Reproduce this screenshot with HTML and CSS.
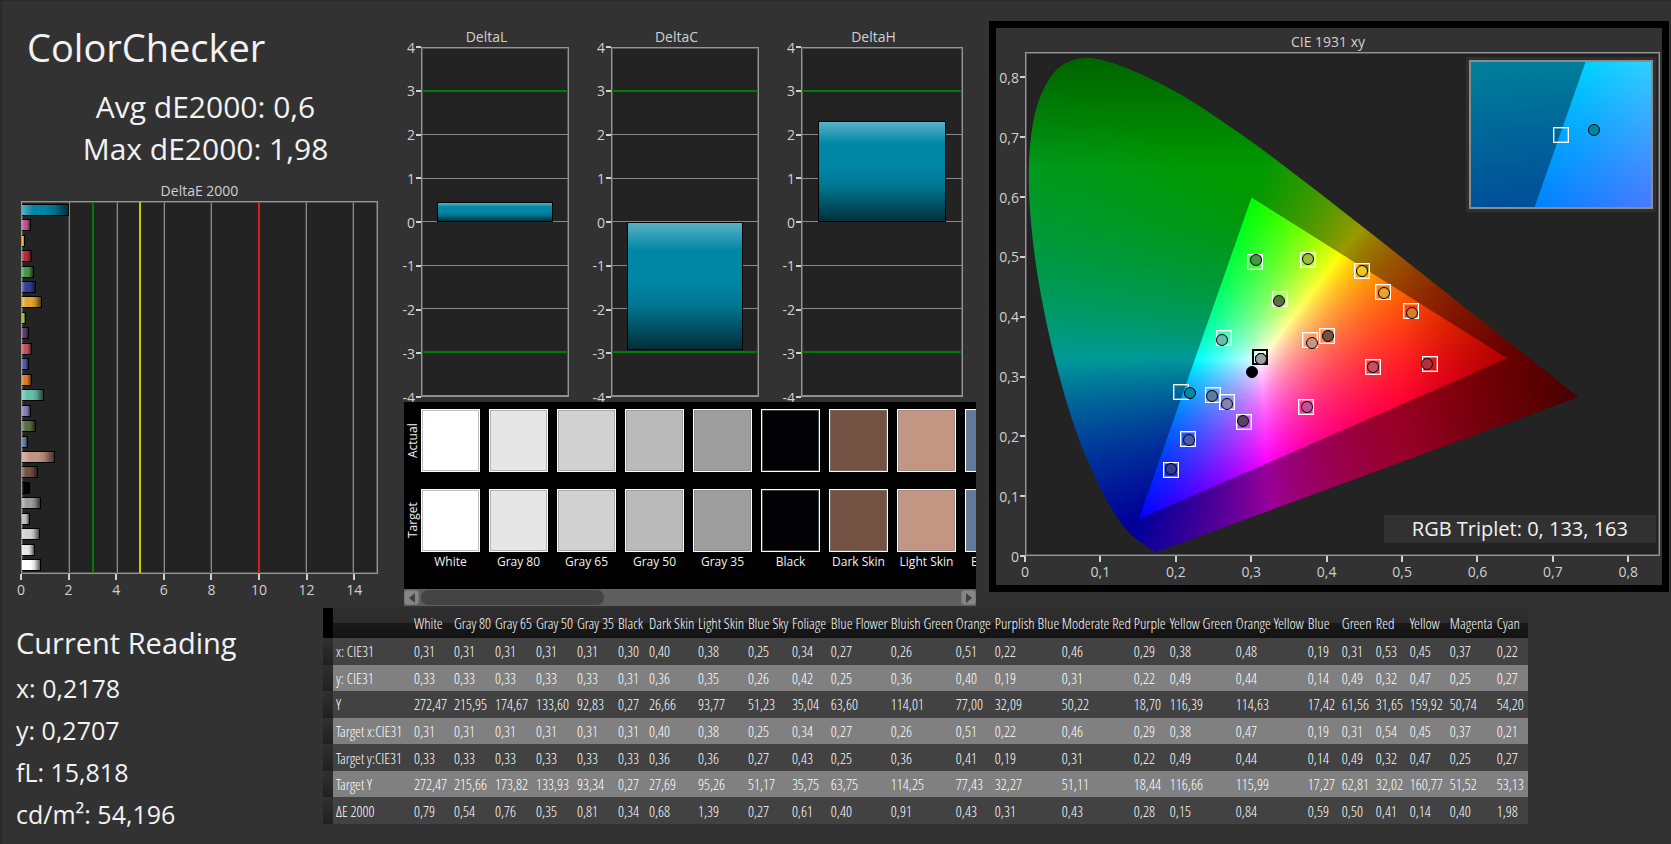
FILE: index.html
```html
<!DOCTYPE html>
<html lang="en">

<head>
    <meta charset="UTF-8" />
    <meta name="viewport" content="width=device-width, initial-scale=1.0" />
    <title>ColorChecker</title>
    <link rel="stylesheet" href="styles.css">
</head>

<body>
    <main class="top">
        <section class="summary">
            <h1>ColorChecker</h1>
            <p class="stat">Avg dE2000: 0,6</p>
            <p class="stat">Max dE2000: 1,98</p>
            <h2 class="chart-title">DeltaE 2000</h2>
            <div class="plot de-plot" data-deplot></div>
            <div class="x-axis" data-deaxis></div>
        </section>

        <section class="middle">
            <div class="deltas" data-deltas></div>
            <div class="swatches">
                <div class="swatch-view">
                    <div class="swatch-side">
                        <span>Actual</span>
                        <span>Target</span>
                    </div>
                    <div class="swatch-list" data-swatches></div>
                </div>
                <div class="scrollbar">
                    <button type="button" aria-label="Scroll left"><svg viewBox="0 0 6 10"><path d="M6 0v10L0 5z" /></svg></button>
                    <div class="track"><div class="thumb"></div></div>
                    <button type="button" aria-label="Scroll right"><svg viewBox="0 0 6 10"><path d="M0 0v10l6-5z" /></svg></button>
                </div>
            </div>
        </section>

        <section class="cie">
            <h2 class="chart-title">CIE 1931 xy</h2>
            <div class="cie-body">
                <div class="cie-y" data-ciey></div>
                <div class="plot cie-plot" data-cieplot>
                    <canvas data-gamut></canvas>
                    <div class="inset" data-inset><canvas data-zoom></canvas></div>
                    <p class="triplet">RGB Triplet: 0, 133, 163</p>
                </div>
            </div>
            <div class="x-axis cie-x" data-ciex></div>
        </section>
    </main>

    <div class="bottom">
        <section class="reading">
            <h2>Current Reading</h2>
            <p>x: 0,2178</p>
            <p>y: 0,2707</p>
            <p>fL: 15,818</p>
            <p>cd/m²: 54,196</p>
        </section>
        <div class="table-wrap">
            <table data-table></table>
        </div>
    </div>

    <script src="script.js"></script>
</body>

</html>
```
FILE: styles.css
```css
* {
    margin: 0;
    padding: 0;
    box-sizing: border-box;
}

body {
    font-family: "Open Sans", "Noto Sans", sans-serif;
    background: #323232;
    color: #f2f2f2;
    min-height: 100vh;
    border-left: 2px solid #2a2a2a;
    border-top: 1px solid #2a2a2a;
    overflow-x: hidden;
}

.top {
    display: grid;
    grid-template-columns: minmax(0, 402fr) minmax(0, 585fr) minmax(0, 680fr);
    padding-right: 2px;
}

h1 {
    font-size: 38px;
    font-weight: 400;
    line-height: 50px;
    padding: 0 6px;
    margin-bottom: 14px;
}

.stat {
    font-size: 30px;
    line-height: 42px;
    text-align: center;
    padding-left: 12px;
}

.chart-title {
    font-size: 14px;
    font-weight: 400;
    line-height: 20px;
    text-align: center;
    color: #d0d0d0;
}

.summary {
    padding: 21px 26px 0 19px;
}

.summary .chart-title {
    margin-top: 11px;
}

.plot {
    position: relative;
    background: #232323;
    border: 1px solid #959595;
    box-shadow: inset 0 0 0 1px #555;
}

.de-plot {
    height: 373px;
    display: flex;
    flex-direction: column;
}

.grid-v,
.limit-v {
    position: absolute;
    top: 0;
    bottom: 0;
    width: 1px;
    background: #8a8a8a;
    box-shadow: -1px 0 #454545;
}

.limit-v {
    width: 2px;
    margin-left: -1px;
    box-shadow: none;
}

.limit-v.green {
    background: #007c00;
}

.limit-v.yellow {
    background: #c8c800;
}

.limit-v.red {
    background: #d42020;
}

.de-row {
    flex: 1;
    display: flex;
    align-items: center;
}

.de-bar {
    position: relative;
    height: 12px;
    border: 1px solid #000;
    border-left: none;
    background-image: linear-gradient(to right, rgba(255, 255, 255, 0.35), rgba(255, 255, 255, 0) 25%, rgba(0, 0, 0, 0) 50%, rgba(0, 0, 0, 0.15) 70%, rgba(0, 0, 0, 0.65));
}

.x-axis {
    position: relative;
    height: 27px;
    font-size: 14px;
    line-height: 20px;
    color: #d0d0d0;
}

.x-axis span {
    position: absolute;
    width: 40px;
    margin-left: -20px;
    text-align: center;
}

.x-axis span::before {
    content: "";
    display: block;
    width: 2px;
    height: 6px;
    margin: 0 auto;
    background: #d0d0d0;
}

/* delta charts */
.middle {
    min-width: 0;
    padding: 26px 13px 0 0;
}

.deltas {
    display: grid;
    grid-template-columns: minmax(0, 165fr) minmax(0, 165fr) minmax(0, 179fr);
    gap: 25px;
    padding-right: 13px;
    margin-bottom: 5px;
}

.delta-body {
    display: flex;
    height: 350px;
}

.delta-axis {
    width: 17px;
    display: flex;
    flex-direction: column;
    justify-content: space-between;
    font-size: 14px;
    color: #d0d0d0;
}

.delta-axis span,
.cie-y span {
    height: 0;
    display: flex;
    align-items: center;
    justify-content: flex-end;
    white-space: nowrap;
}

.delta-axis span::after,
.cie-y span::after {
    content: "";
    flex: none;
    width: 5px;
    height: 2px;
    margin-left: 1px;
    background: #d0d0d0;
}

.delta-plot {
    flex: 1;
    display: flex;
    flex-direction: column;
}

.grid-h {
    flex: 1;
    border-bottom: 1px solid #8a8a8a;
}

.grid-h:last-child {
    border-bottom: none;
}

.limit-h {
    position: absolute;
    left: 0;
    right: 0;
    height: 2px;
    margin-top: -2px;
    background: #007c00;
}

.delta-bar {
    position: absolute;
    left: 10%;
    width: 80%;
    border: 1px solid #000;
    background: linear-gradient(rgba(255, 255, 255, 0.35), rgba(255, 255, 255, 0) 22%, rgba(0, 0, 0, 0) 45%, rgba(0, 0, 0, 0.12) 65%, rgba(0, 0, 0, 0.65)) #0087a6;
}

/* swatches */
.swatches {
    position: relative;
    background: #000;
}

.swatch-view {
    height: 187px;
    padding-top: 7px;
    display: flex;
    overflow: hidden;
}

.swatch-side {
    flex: none;
    width: 17px;
    display: flex;
    flex-direction: column;
    gap: 17px;
}

.swatch-side span {
    height: 63px;
    width: 17px;
    writing-mode: vertical-rl;
    transform: rotate(180deg);
    font-size: 12px;
    line-height: 17px;
    text-align: center;
}

.swatch-list {
    display: flex;
    gap: 9px;
}

.swatch {
    flex: none;
    width: 59px;
    font-size: 12px;
    line-height: 20px;
    text-align: center;
}

.swatch i {
    display: block;
    height: 63px;
    border: 1px solid #fff;
    box-shadow: inset 0 0 0 1px rgba(128, 128, 128, 0.5);
}

.swatch i + i {
    margin-top: 17px;
}

.swatch span {
    display: block;
    white-space: nowrap;
}

.scrollbar {
    display: flex;
    align-items: center;
    height: 17px;
    background: #5f5f5f;
}

.scrollbar button {
    width: 15px;
    height: 15px;
    display: flex;
    align-items: center;
    justify-content: center;
    background: #868686;
    border: 1px solid #777;
    border-radius: 3px;
}

.scrollbar svg {
    width: 6px;
    height: 10px;
    fill: #404040;
}

.track {
    flex: 1;
    padding: 0 2px;
}

.thumb {
    width: 34%;
    height: 15px;
    border-radius: 7px;
    background: #444;
}

/* chromaticity diagram */
.cie {
    margin-top: 20px;
    border: 7px solid #000;
    padding: 4px 2px 3px 0;
    align-self: start;
}

.cie-body {
    display: flex;
    height: 504px;
}

.cie-y {
    position: relative;
    width: 29px;
    font-size: 14px;
    color: #d0d0d0;
}

.cie-y span {
    position: absolute;
    right: 0;
}

.cie-plot {
    flex: 1;
    min-width: 0;
}

canvas {
    display: block;
    width: 100%;
    height: 100%;
}

.cie-x {
    margin-left: 29px;
    height: 26px;
}

.target,
.actual {
    position: absolute;
    width: 16px;
    height: 16px;
    margin: -8px 0 0 -8px;
    border: 1px solid #fff;
    box-shadow: inset 0 0 0 1px rgba(255, 255, 255, 0.4);
}

.target.dark {
    border: 2px solid #000;
    box-shadow: none;
}

.actual {
    width: 12px;
    height: 12px;
    margin: -6px 0 0 -6px;
    border: 1px solid #000;
    border-radius: 50%;
    box-shadow: none;
}

.inset {
    position: absolute;
    top: 7px;
    right: 6px;
    width: 29%;
    height: 149px;
    border: 2px solid #8c8c8c;
    box-shadow: 0 0 0 3px #2f2f2f;
}

.triplet {
    position: absolute;
    right: 3px;
    bottom: 12px;
    width: 43%;
    background: #313131;
    font-size: 20px;
    line-height: 28px;
    text-align: center;
}

/* bottom part */
.bottom {
    display: flex;
    padding: 2px 143px 0 0;
}

.reading {
    flex: none;
    width: 321px;
    padding: 15px 0 0 14px;
}

.reading h2 {
    font-size: 29px;
    font-weight: 400;
    line-height: 40px;
    margin-bottom: 4px;
}

.reading p {
    font-size: 25px;
    line-height: 42px;
}

.table-wrap {
    flex: 1;
    min-width: 0;
}

table {
    width: 100%;
    height: 216px;
    table-layout: fixed;
    border-collapse: collapse;
    font-family: "Open Sans Condensed Light", "Open Sans Condensed", "Open Sans", sans-serif;
    font-size: 15px;
    line-height: 16px;
    color: #fff;
}

th,
td {
    padding-left: 3px;
    font-weight: 300;
    text-align: left;
    white-space: nowrap;
}

thead tr {
    height: 30px;
    background: linear-gradient(#2d2d2d 50%, #1a1a1a 50%, #131313);
}

thead .edge {
    background: #000;
}

tbody tr {
    background: #424242;
}

tbody tr:nth-child(even) {
    background: #808080;
}

tbody .edge {
    background: linear-gradient(#303030, #202020);
}
```
FILE: script.js
```js
// name, column width, colour, actual xy, target xy, then the table values
const patches = [
    ["White", 40, "#ffffff", [.3122, .3296], [.3112, .3320], "0,31 0,33 272,47 0,31 0,33 272,47 0,79"],
    ["Gray 80", 41, "#e6e6e6", [.3122, .3296], null, "0,31 0,33 215,95 0,31 0,33 215,66 0,54"],
    ["Gray 65", 41, "#d1d1d2", [.3122, .3296], null, "0,31 0,33 174,67 0,31 0,33 173,82 0,76"],
    ["Gray 50", 41, "#bababa", [.3130, .3290], null, "0,31 0,33 133,60 0,31 0,33 133,93 0,35"],
    ["Gray 35", 41, "#9e9e9f", [.3122, .3296], null, "0,31 0,33 92,83 0,31 0,33 93,34 0,81"],
    ["Black", 31, "#020204", [.3010, .3079], null, "0,30 0,31 0,27 0,31 0,33 0,27 0,34"],
    ["Dark Skin", 49, "#735243", [.4014, .3672], [.4005, .3672], "0,40 0,36 26,66 0,40 0,36 27,69 0,68"],
    ["Light Skin", 50, "#c39583", [.3800, .3554], [.3780, .3601], "0,38 0,35 93,77 0,38 0,36 95,26 1,39"],
    ["Blue Sky", 44, "#5e7b9e", [.2476, .2672], [.2482, .2680], "0,25 0,26 51,23 0,25 0,27 51,17 0,27"],
    ["Foliage", 39, "#5b6d42", [.3368, .4258], [.3382, .4302], "0,34 0,42 35,04 0,34 0,43 35,75 0,61"],
    ["Blue Flower", 60, "#8482b4", [.2668, .2529], [.2678, .2566], "0,27 0,25 63,60 0,27 0,25 63,75 0,40"],
    ["Bluish Green", 65, "#64bfaa", [.2612, .3601], [.2630, .3643], "0,26 0,36 114,01 0,26 0,36 114,25 0,91"],
    ["Orange", 39, "#dc7b2b", [.5134, .4067], [.5123, .4087], "0,51 0,40 77,00 0,51 0,41 77,43 0,43"],
    ["Purplish Blue", 67, "#4a5ca8", [.2166, .1926], [.2157, .1946], "0,22 0,19 32,09 0,22 0,19 32,27 0,31"],
    ["Moderate Red", 72, "#c35262", [.4616, .3154], [.4612, .3149], "0,46 0,31 50,22 0,46 0,31 51,11 0,43"],
    ["Purple", 36, "#5e3c6c", [.2893, .2253], [.2897, .2231], "0,29 0,22 18,70 0,29 0,22 18,44 0,28"],
    ["Yellow Green", 66, "#9fba42", [.3745, .4961], [.3749, .4955], "0,38 0,49 116,39 0,38 0,49 116,66 0,15"],
    ["Orange Yellow", 72, "#e6a32e", [.4764, .4397], [.4745, .4419], "0,48 0,44 114,63 0,47 0,44 115,99 0,84"],
    ["Blue", 34, "#343e96", [.1924, .1449], [.1924, .1427], "0,19 0,14 17,42 0,19 0,14 17,27 0,59"],
    ["Green", 34, "#499649", [.3066, .4945], [.3046, .4920], "0,31 0,49 61,56 0,31 0,49 62,81 0,50"],
    ["Red", 34, "#b0303c", [.5338, .3203], [.5375, .3199], "0,53 0,32 31,65 0,54 0,32 32,02 0,41"],
    ["Yellow", 40, "#edc823", [.4472, .4760], [.4466, .4760], "0,45 0,47 159,92 0,45 0,47 160,77 0,14"],
    ["Magenta", 47, "#bd5496", [.3743, .2487], [.3729, .2487], "0,37 0,25 50,74 0,37 0,25 51,52 0,40"],
    ["Cyan", 34, "#0085a3", [.2177, .2722], [.2064, .2730], "0,22 0,27 54,20 0,21 0,27 53,13 1,98"],
].map(([name, width, color, actual, target, values]) => ({ name, width, color, actual, target, values: values.split(" ") }));

const find = (name) => document.querySelector(`[data-${name}]`);

function add(parent, tag, className, text) {
    const el = document.createElement(tag);
    if (className) el.className = className;
    if (text !== undefined) el.textContent = text;
    parent.appendChild(el);
    return el;
}

// DeltaE bars, axis runs from 0 to 15
const dePlot = find("deplot");
for (let v = 2; v < 15; v += 2) {
    if (v !== 10) add(dePlot, "div", "grid-v").style.left = `${v / 15 * 100}%`;
}
[[3, "green"], [5, "yellow"], [10, "red"]].forEach(([v, color]) => {
    add(dePlot, "div", `limit-v ${color}`).style.left = `${v / 15 * 100}%`;
});
[...patches].reverse().forEach((patch) => {
    const bar = add(add(dePlot, "div", "de-row"), "div", "de-bar");
    bar.style.width = `${parseFloat(patch.values[6].replace(",", ".")) / 15 * 100}%`;
    bar.style.backgroundColor = patch.color;
});
for (let v = 0; v < 15; v += 2) {
    add(find("deaxis"), "span", "", v).style.left = `${v / 15 * 100}%`;
}

// DeltaL / DeltaC / DeltaH, axis runs from -4 to 4
[["DeltaL", 0.47], ["DeltaC", -2.95], ["DeltaH", 2.33]].forEach(([name, value]) => {
    const chart = add(find("deltas"), "div", "delta");
    add(chart, "h2", "chart-title", name);
    const body = add(chart, "div", "delta-body");
    const axis = add(body, "div", "delta-axis");
    for (let v = 4; v >= -4; v--) add(axis, "span", "", v);
    const plot = add(body, "div", "plot delta-plot");
    for (let i = 0; i < 8; i++) add(plot, "div", "grid-h");
    [3, -3].forEach((v) => {
        add(plot, "div", "limit-h").style.top = `${(4 - v) / 8 * 100}%`;
    });
    const bar = add(plot, "div", "delta-bar");
    bar.style.top = `${(4 - Math.max(value, 0)) / 8 * 100}%`;
    bar.style.height = `${Math.abs(value) / 8 * 100}%`;
});

patches.forEach((patch) => {
    const swatch = add(find("swatches"), "div", "swatch");
    add(swatch, "i").style.background = patch.color;
    add(swatch, "i").style.background = patch.color;
    add(swatch, "span", "", patch.name);
});

// Table
const table = find("table");
const cols = add(table, "colgroup");
[10, 78, ...patches.map((p) => p.width)].forEach((w) => {
    add(cols, "col").style.width = `${w / 1205 * 100}%`;
});
const headRow = add(add(table, "thead"), "tr");
add(headRow, "td", "edge");
add(headRow, "td");
patches.forEach((p) => add(headRow, "th", "", p.name));
const tbody = add(table, "tbody");
["x: CIE31", "y: CIE31", "Y", "Target x:CIE31", "Target y:CIE31", "Target Y", "ΔE 2000"].forEach((label, i) => {
    const row = add(tbody, "tr");
    add(row, "td", "edge");
    add(row, "th", "", label);
    patches.forEach((p) => add(row, "td", "", p.values[i]));
});

// Chromaticity diagram
const locus = [
    [.1741, .0050], [.1714, .0051], [.1644, .0109], [.1566, .0177], [.1440, .0297], [.1355, .0399],
    [.1241, .0578], [.1096, .0868], [.0913, .1327], [.0687, .2007], [.0454, .2950], [.0235, .4127],
    [.0082, .5384], [.0039, .6548], [.0139, .7502], [.0389, .8120], [.0743, .8338], [.1142, .8262],
    [.1547, .8059], [.1929, .7816], [.2296, .7543], [.3016, .6923], [.3731, .6245], [.4441, .5547],
    [.5125, .4866], [.5752, .4242], [.6270, .3725], [.6658, .3340], [.6915, .3083], [.7190, .2809], [.7347, .2653],
];
const triangle = [[.64, .33], [.30, .60], [.15, .06]];

function xyColor(x, y) {
    const X = x / y;
    const Z = (1 - x - y) / y;
    const rgb = [
        3.2406 * X - 1.5372 - 0.4986 * Z,
        -0.9689 * X + 1.8758 + 0.0415 * Z,
        0.0557 * X - 0.2040 + 1.0570 * Z,
    ].map((c) => Math.max(c, 0));
    const max = Math.max(...rgb);
    const fade = Math.min(1, 1 - (x - 0.5) * 2.3) * Math.min(1, 1 - (y - 0.65) * 1.9);
    return rgb.map((c) => 255 * fade * c / max);
}

function fillColors(w, h, view, level) {
    const layer = document.createElement("canvas");
    layer.width = w;
    layer.height = h;
    const ctx = layer.getContext("2d");
    const image = ctx.createImageData(w, h);
    for (let j = 0; j < h; j++) {
        const y = view.y1 - (j + 0.5) / h * (view.y1 - view.y0);
        for (let i = 0; i < w; i++) {
            const x = view.x0 + (i + 0.5) / w * (view.x1 - view.x0);
            const rgb = xyColor(x, y);
            const k = (j * w + i) * 4;
            for (let c = 0; c < 3; c++) image.data[k + c] = rgb[c] * level;
            image.data[k + 3] = 255;
        }
    }
    ctx.putImageData(image, 0, 0);
    return layer;
}

function drawGamut(canvas, view) {
    const w = canvas.width = canvas.clientWidth;
    const h = canvas.height = canvas.clientHeight;
    const ctx = canvas.getContext("2d");
    const point = ([x, y]) => [(x - view.x0) / (view.x1 - view.x0) * w, (view.y1 - y) / (view.y1 - view.y0) * h];

    // smooth curve through every locus point
    const p = locus.map(point);
    ctx.beginPath();
    ctx.moveTo(...p[0]);
    for (let i = 0; i < p.length - 1; i++) {
        const a = p[Math.max(i - 1, 0)];
        const b = p[i];
        const c = p[i + 1];
        const d = p[Math.min(i + 2, p.length - 1)];
        ctx.bezierCurveTo(
            b[0] + (c[0] - a[0]) / 6, b[1] + (c[1] - a[1]) / 6,
            c[0] - (d[0] - b[0]) / 6, c[1] - (d[1] - b[1]) / 6,
            c[0], c[1]
        );
    }
    ctx.closePath();
    ctx.fillStyle = ctx.createPattern(fillColors(w, h, view, 0.6), "no-repeat");
    ctx.fill();

    ctx.beginPath();
    triangle.map(point).forEach((t) => ctx.lineTo(...t));
    ctx.closePath();
    ctx.fillStyle = ctx.createPattern(fillColors(w, h, view, 1), "no-repeat");
    ctx.fill();
}

function drawPoint(parent, view, className, [x, y], color) {
    const el = add(parent, "div", className);
    el.style.left = `${(x - view.x0) / (view.x1 - view.x0) * 100}%`;
    el.style.top = `${(view.y1 - y) / (view.y1 - view.y0) * 100}%`;
    if (color) el.style.background = color;
}

const full = { x0: 0, x1: 0.842, y0: 0, y1: 0.8425 };
const near = { x0: 0.1789, x1: 0.2395, y0: 0.2412, y1: 0.3028 };
const ciePlot = find("cieplot");

patches.forEach((patch) => {
    if (patch.target) drawPoint(ciePlot, full, patch.name === "White" ? "target dark" : "target", patch.target);
});
patches.forEach((patch) => drawPoint(ciePlot, full, "actual", patch.actual, patch.color));
drawPoint(find("inset"), near, "target", [.2092, .2720]);
drawPoint(find("inset"), near, "actual", [.2204, .2738], "#0085a3");

for (let i = 0; i <= 8; i++) {
    const text = i ? `0,${i}` : "0";
    add(find("ciex"), "span", "", text).style.left = `${i / 8.42 * 100}%`;
    add(find("ciey"), "span", "", text).style.bottom = `${i / 8.425 * 100}%`;
}

function drawAll() {
    drawGamut(find("gamut"), full);
    drawGamut(find("zoom"), near);
}

drawAll();
window.addEventListener("resize", drawAll);
```
